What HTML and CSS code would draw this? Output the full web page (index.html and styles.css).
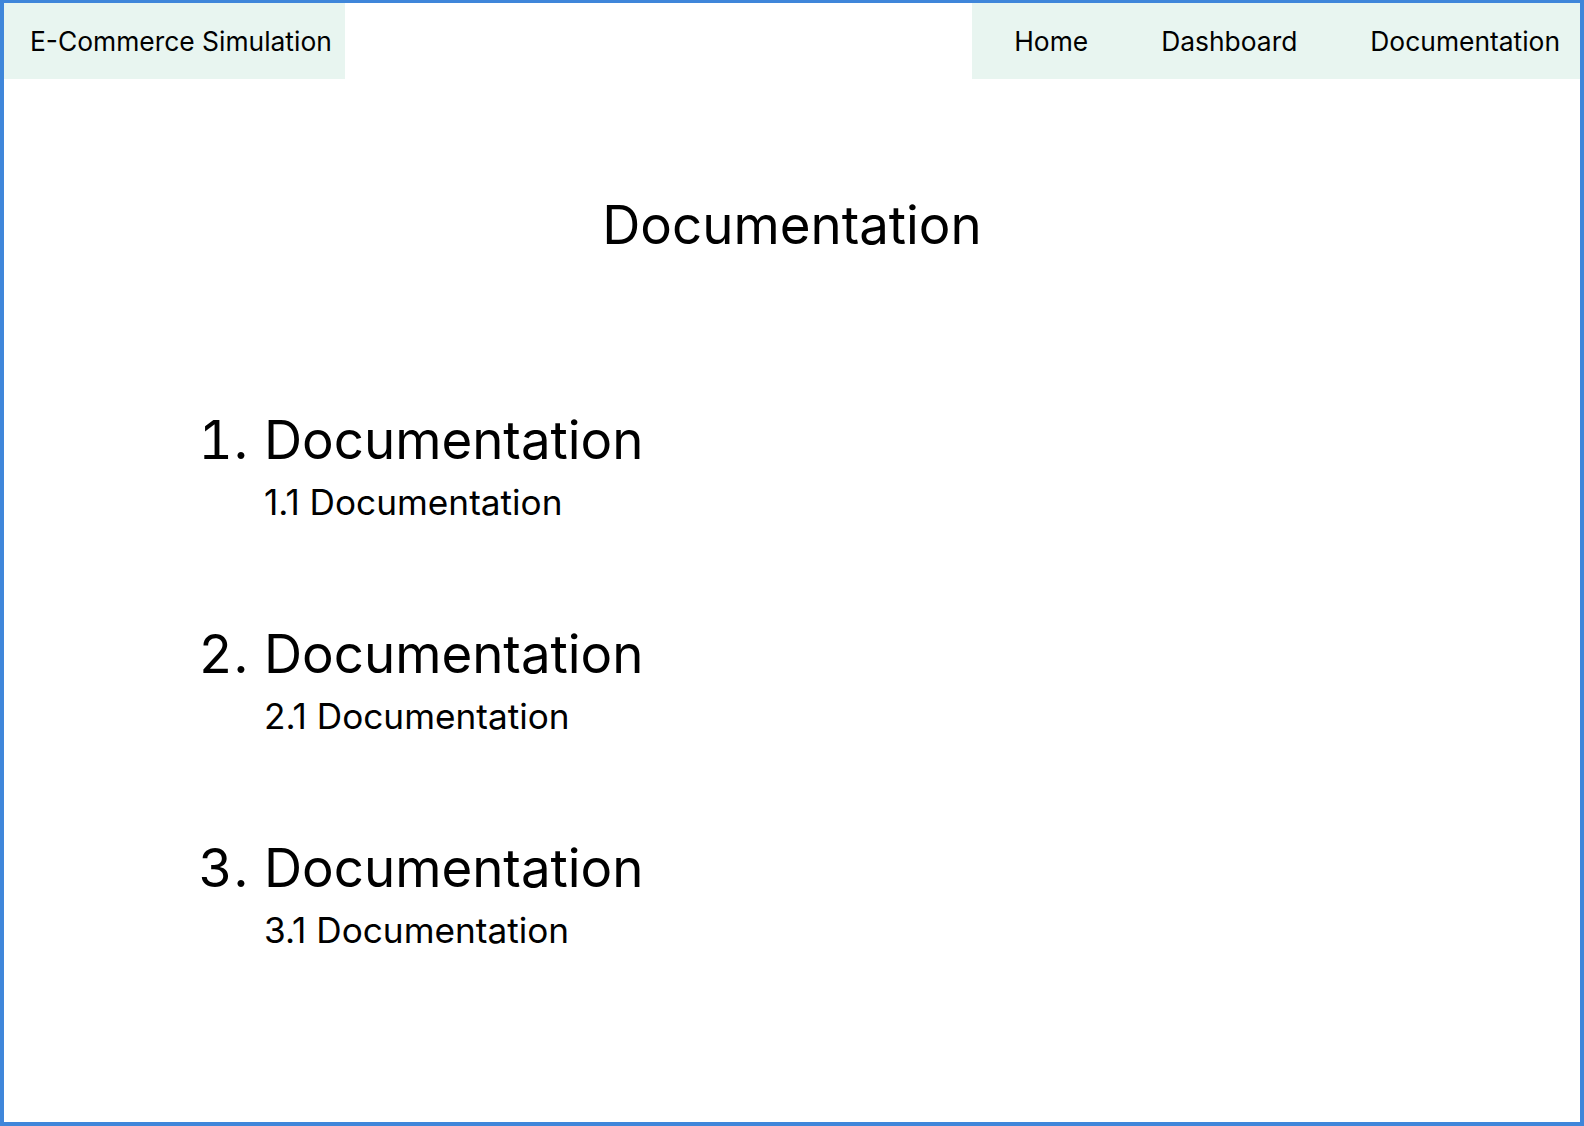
FILE: index.html
```html
<!DOCTYPE html>
<html lang="en">
<head>
<meta charset="utf-8">
<title>Documentation</title>
<link rel="stylesheet" href="styles.css">
</head>
<body>
<div class="frame">
  <header class="topbar">
    <div class="brand">E-Commerce Simulation</div>
    <nav class="nav">
      <a class="nav-link" href="#">Home</a>
      <a class="nav-link" href="#">Dashboard</a>
      <a class="nav-link" href="#">Documentation</a>
    </nav>
  </header>
  <main class="content">
    <h1 class="title">Documentation</h1>
    <ol class="doc-list">
      <li class="doc-item">Documentation
        <div class="doc-sub">1.1 Documentation</div>
      </li>
      <li class="doc-item">Documentation
        <div class="doc-sub">2.1 Documentation</div>
      </li>
      <li class="doc-item">Documentation
        <div class="doc-sub">3.1 Documentation</div>
      </li>
    </ol>
  </main>
</div>
</body>
</html>
```
FILE: styles.css
```css
* { box-sizing: border-box; }
html, body { margin: 0; padding: 0; }
body {
  font-family: Inter, "Noto Sans", sans-serif;
  color: #000;
  background: #fff;
}
.frame {
  height: 1126px;
  border-style: solid;
  border-color: #3f86da;
  border-width: 3px 4px 4px 4px;
  display: flex;
  flex-direction: column;
  overflow: hidden;
}
.topbar {
  flex: 0 0 76px;
  display: flex;
  justify-content: space-between;
}
.brand {
  background: #e8f5f0;
  display: flex;
  align-items: center;
  padding: 0 13px 0 26px;
  font-size: 26.4px;
}
.nav {
  background: #e8f5f0;
  display: flex;
  align-items: center;
  padding: 0 20px 0 42px;
  gap: 73px;
}
.nav-link {
  color: #000;
  text-decoration: none;
  font-size: 26.4px;
}
.content {
  flex: 1;
}
.title {
  margin: 114px 0 0;
  text-align: center;
  font-size: 52.8px;
  font-weight: 400;
  line-height: 64px;
}
.doc-list {
  margin: 151px 0 0;
  padding-left: 260px;
  font-size: 52.8px;
}
.doc-item {
  line-height: 64px;
  margin-bottom: 98px;
}
.doc-item::marker {
  letter-spacing: 1px;
}
.doc-sub {
  margin-top: 8px;
  font-size: 35.2px;
  line-height: 44px;
}
```
